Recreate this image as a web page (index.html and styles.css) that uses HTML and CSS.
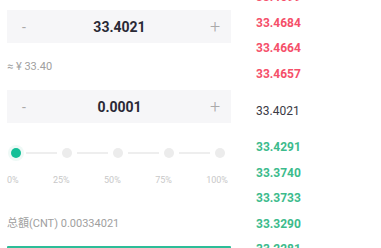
FILE: index.html
```html
<!DOCTYPE html>
<html lang="en">
<head>
    <meta charset="UTF-8">
    <meta name="viewport" content="width=device-width, initial-scale=1.0">
    <title>Trade</title>
    <link rel="stylesheet" href="styles.css">
</head>
<body>
    <div class="trade">
        <div class="order-form">
            <div class="stepper">
                <span class="step-btn">-</span>
                <span class="step-value">33.4021</span>
                <span class="step-btn plus">+</span>
            </div>
            <div class="approx">≈ ¥ 33.40</div>
            <div class="stepper">
                <span class="step-btn">-</span>
                <span class="step-value">0.0001</span>
                <span class="step-btn plus">+</span>
            </div>
            <div class="slider">
                <span class="dot active"></span>
                <span class="track"></span>
                <span class="dot"></span>
                <span class="track"></span>
                <span class="dot"></span>
                <span class="track"></span>
                <span class="dot"></span>
                <span class="track"></span>
                <span class="dot"></span>
            </div>
            <div class="slider-labels">
                <span>0%</span>
                <span>25%</span>
                <span>50%</span>
                <span>75%</span>
                <span>100%</span>
            </div>
            <div class="total">总額(CNT) 0.00334021</div>
            <div class="submit-btn"></div>
        </div>

        <div class="depth">
            <div class="price sell">33.4699</div>
            <div class="price sell">33.4684</div>
            <div class="price sell">33.4664</div>
            <div class="price sell">33.4657</div>
            <div class="price current">33.4021</div>
            <div class="price buy">33.4291</div>
            <div class="price buy">33.3740</div>
            <div class="price buy">33.3733</div>
            <div class="price buy">33.3290</div>
            <div class="price buy">33.2281</div>
        </div>
    </div>
</body>
</html>
```

FILE: styles.css
```css
body {
    margin: 0;
    font-family: Roboto, "Noto Sans CJK SC", sans-serif;
    background-color: #fff;
    overflow: hidden;
}

.trade {
    display: flex;
    align-items: flex-start;
    height: 248px;
    overflow: hidden;
}

.order-form {
    width: 224px;
    padding-left: 7px;
    padding-top: 10px;
    display: flex;
    flex-direction: column;
    flex-shrink: 0;
}

.order-form > * {
    flex-shrink: 0;
}

.stepper {
    height: 33px;
    background-color: #f6f6f8;
    display: flex;
    align-items: center;
    justify-content: space-between;
    padding: 0 9px 0 10px;
}

.step-btn {
    width: 14px;
    color: #aaa;
    font-size: 14px;
    text-align: center;
}

.step-btn.plus {
    font-size: 18px;
    font-weight: 300;
}

.step-value {
    font-size: 14px;
    font-weight: bold;
    color: #2a2a36;
}

.approx {
    height: 47px;
    line-height: 47px;
    font-size: 11px;
    color: #a0a0a0;
}

.slider {
    margin-top: 25px;
    display: flex;
    align-items: center;
    padding: 0 6px 0 4px;
}

.dot {
    width: 10px;
    height: 10px;
    border-radius: 50%;
    background-color: #ececec;
    flex-shrink: 0;
}

.dot.active {
    background-color: #13bf97;
    box-shadow: 0 0 0 3px #eef9f6;
}

.track {
    flex: 1;
    height: 2px;
    background-color: #eee;
    margin: 0 5px;
}

.slider-labels {
    display: flex;
    justify-content: space-between;
    margin-top: 17px;
    font-size: 9px;
    color: #c8c8c8;
    padding-right: 3px;
}

.total {
    margin-top: 29px;
    font-size: 11px;
    color: #a0a0a0;
}

.submit-btn {
    margin-top: 16px;
    height: 36px;
    background-color: #2dbd98;
    border-radius: 1px;
}

.depth {
    margin-left: 25px;
    margin-top: -15px;
    display: flex;
    flex-direction: column;
}

.price {
    height: 25.5px;
    line-height: 25.5px;
    font-size: 12px;
    font-weight: bold;
}

.sell {
    color: #f5506a;
}

.buy {
    color: #3cbb8c;
}

.current {
    height: 48px;
    line-height: 48px;
    color: #3a3a44;
    font-weight: normal;
}
```
